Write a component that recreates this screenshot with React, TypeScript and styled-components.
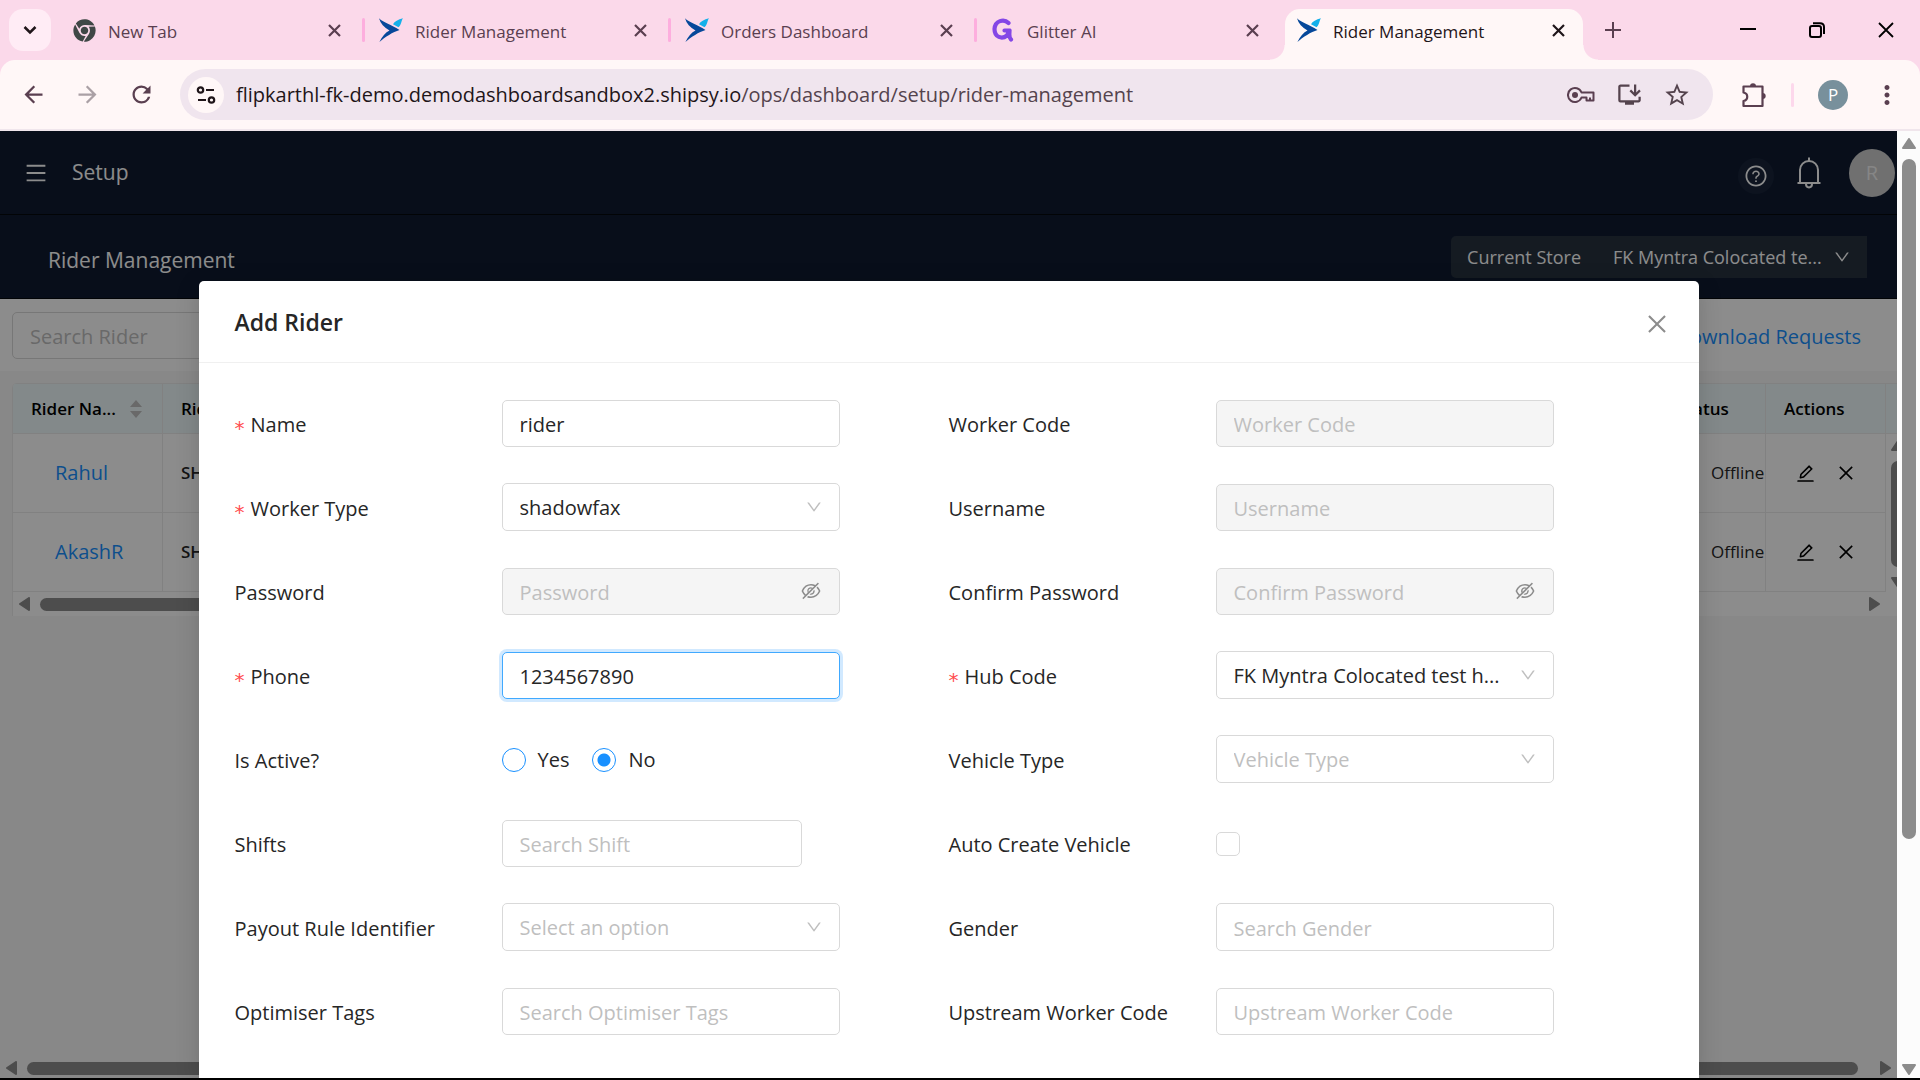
import React from "react";
import styled, { createGlobalStyle, css } from "styled-components";
import {
  AiOutlineClose,
  AiOutlineDown,
  AiOutlineEdit,
  AiOutlineEyeInvisible,
  AiOutlineMenu,
  AiOutlineQuestionCircle,
} from "react-icons/ai";
import {
  MdArrowBack,
  MdArrowForward,
  MdMoreVert,
  MdOutlineInstallDesktop,
  MdRefresh,
  MdStarOutline,
} from "react-icons/md";
import { FaChrome } from "react-icons/fa";

const GlobalStyle = createGlobalStyle`
  * { box-sizing: border-box; }
  body {
    margin: 0;
    font-family: "Open Sans", "Noto Sans", sans-serif;
    font-size: 20px;
    line-height: 32px;
    color: #262626;
    background: #000;
  }
  button, input, select { font: inherit; color: inherit; }
  h1, h2, p { margin: 0; font-weight: 400; }
`;

const BrowserWindow = styled.div`
  display: flex;
  flex-direction: column;
  height: 100vh;
  padding-bottom: 2px;
  overflow: hidden;
  background: #000;
`;

/* ---------- browser frame ---------- */

const TabStrip = styled.header`
  display: flex;
  flex: none;
  height: 60px;
  padding-left: 9px;
  background: #fbd9ea;
  color: #5a3f50;
`;

const PlainButton = styled.button<{ $w?: number; $h?: number }>`
  display: flex;
  flex: none;
  align-items: center;
  justify-content: center;
  width: ${(p) => p.$w ?? 42}px;
  height: ${(p) => p.$h ?? 42}px;
  padding: 0;
  border: 0;
  background: transparent;
`;

const TabSearch = styled(PlainButton)`
  margin: 9px 10px 0 0;
  border-radius: 14px;
  background: #ffecf5;
  color: #1f1519;
`;

const Tabs = styled.nav`
  display: flex;
  align-items: flex-end;
  gap: 8px;
  min-width: 0;
`;

const Tab = styled.div<{ $active?: boolean; $divider?: boolean }>`
  position: relative;
  display: flex;
  align-items: center;
  width: 298px;
  height: 51px;
  padding: 0 13px 9px 12px;
  gap: 12px;
  border-radius: 15px 15px 0 0;
  ${(p) =>
    p.$active &&
    css`
      background: #fff7f7;
      color: #1f1519;
      &::before,
      &::after {
        content: "";
        position: absolute;
        bottom: 0;
        width: 15px;
        height: 15px;
      }
      &::before {
        right: 100%;
        background: radial-gradient(circle at 0 0, transparent 14px, #fff7f7 15px);
      }
      &::after {
        left: 100%;
        background: radial-gradient(circle at 100% 0, transparent 14px, #fff7f7 15px);
      }
    `}
  ${(p) =>
    p.$divider &&
    css`
      &::after {
        content: "";
        position: absolute;
        left: calc(100% + 3px);
        top: 9px;
        width: 3px;
        height: 24px;
        border-radius: 2px;
        background: #fdaede;
      }
    `}
`;

const TabTitle = styled.span`
  flex: 1;
  padding-top: 4px;
  font-size: 17px;
  line-height: 24px;
  white-space: nowrap;
`;

const NewTab = styled(PlainButton)`
  margin: 9px 0 0 9px;
  color: #5a3f50;
`;

const WindowControls = styled.div`
  display: flex;
  margin-left: auto;
  color: #000;
`;

const ToolbarBack = styled.div`
  flex: none;
  background: #fbd9ea;
`;

const Toolbar = styled.div`
  display: flex;
  align-items: center;
  height: 71px;
  padding: 0 12px;
  border-radius: 15px 15px 0 0;
  border-bottom: 2px solid #f0e6ec;
  background: #fff7f7;
  color: #5a3f50;
`;

const NavButtons = styled.div`
  display: flex;
  gap: 12px;
  margin-right: 18px;
`;

const Omnibox = styled.div`
  display: flex;
  flex: 1;
  align-items: center;
  height: 51px;
  padding: 0 12px 0 8px;
  border-radius: 26px;
  background: #f0e5ee;
`;

const SiteInfo = styled(PlainButton)`
  margin-right: 12px;
  border-radius: 50%;
  background: #fff7f7;
  color: #1f1519;
`;

const Url = styled.p`
  flex: 1;
  color: #54434d;
  line-height: 28px;
  white-space: nowrap;
  b {
    font-weight: 400;
    color: #1f1519;
  }
`;

const ToolbarRight = styled.div`
  display: flex;
  align-items: center;
  margin-left: 20px;
`;

const ToolbarDivider = styled.span`
  width: 3px;
  height: 24px;
  margin: 0 18px 0 16px;
  border-radius: 2px;
  background: #fdd8ec;
`;

const ProfileButton = styled(PlainButton)`
  margin-right: 12px;
`;

const ProfileInitial = styled.span`
  display: flex;
  align-items: center;
  justify-content: center;
  width: 30px;
  height: 30px;
  border-radius: 50%;
  background: #78909c;
  color: #fff;
  font-size: 17px;
`;

/* ---------- scroll bars ---------- */

const BarBox = styled.div<{ $vertical?: boolean; $inset: string }>`
  display: flex;
  flex: none;
  flex-direction: ${(p) => (p.$vertical ? "column" : "row")};
  align-items: center;
  gap: 10px;
  padding: ${(p) => p.$inset};
  color: #8c8c8c;
  ${(p) => (p.$vertical ? "width: 23px;" : "height: 20px;")}
  svg { flex: none; }
`;

const BarTrack = styled.div<{ $vertical?: boolean; $size: string }>`
  flex: 1;
  ${(p) => (p.$vertical ? "width: 14px;" : "height: 13px;")}
  &::before {
    content: "";
    display: block;
    border-radius: 7px;
    background: currentColor;
    ${(p) =>
      p.$vertical
        ? css`width: 100%; height: ${p.$size};`
        : css`height: 100%; width: ${p.$size};`}
  }
`;

const arrows = {
  up: { w: 14, h: 11, d: "M7 1 L13 10 H1 Z" },
  down: { w: 14, h: 11, d: "M7 10 L13 1 H1 Z" },
  left: { w: 11, h: 14, d: "M1 7 L10 1 V13 Z" },
  right: { w: 11, h: 14, d: "M10 7 L1 1 V13 Z" },
};

const BarArrow = ({ to }: { to: keyof typeof arrows }) => {
  const a = arrows[to];
  return (
    <svg width={a.w} height={a.h} aria-hidden="true">
      <path d={a.d} fill="currentColor" stroke="currentColor" strokeWidth="2" strokeLinejoin="round" />
    </svg>
  );
};

const ScrollBar = ({ vertical, inset, size }: { vertical?: boolean; inset: string; size: string }) => (
  <BarBox $vertical={vertical} $inset={inset} aria-hidden="true">
    <BarArrow to={vertical ? "up" : "left"} />
    <BarTrack $vertical={vertical} $size={size} />
    <BarArrow to={vertical ? "down" : "right"} />
  </BarBox>
);

/* ---------- page ---------- */

const Viewport = styled.div`
  display: flex;
  flex: 1;
  min-height: 0;
  background: #fcfcfc;
`;

const Page = styled.main`
  position: relative;
  display: flex;
  flex: 1;
  flex-direction: column;
  min-width: 0;
  overflow: hidden;
  background: #f7f7f7;
`;

const TopBar = styled.div`
  display: flex;
  flex: none;
  align-items: center;
  height: 84px;
  padding: 0 2px 0 24px;
  border-bottom: 1px solid #05080c;
  background: #0f1b31;
  color: #fff;
`;

const TopTitle = styled.h1`
  flex: 1;
  margin-left: 12px;
  padding-bottom: 2px;
  font-size: 21px;
  line-height: 32px;
`;

const MenuButton = styled(PlainButton)`
  justify-content: flex-start;
`;

const HelpButton = styled(PlainButton)`
  margin: 6px 17px 0 0;
  border-radius: 50%;
  background: #18243a;
  color: #fff;
`;

const BellButton = styled(PlainButton)`
  margin-right: 22px;
  color: #fff;
`;

const UserBadge = styled.span`
  display: flex;
  align-items: center;
  justify-content: center;
  width: 46px;
  height: 48px;
  border-radius: 50%;
  background: #ccc;
  color: #f5f5f5;
`;

const SubBar = styled.div`
  display: flex;
  flex: none;
  align-items: center;
  justify-content: space-between;
  height: 84px;
  padding: 0 30px 0 48px;
  border-bottom: 1px solid #05080c;
  background: #0f1b31;
  color: #fff;
`;

const SubTitle = styled.h2`
  padding-top: 6px;
  font-size: 21px;
`;

const StorePicker = styled.label`
  display: flex;
  align-items: center;
  height: 42px;
  padding: 0 16px;
  gap: 32px;
  border-radius: 5px 0 0 5px;
  background: #27323f;
  font-size: 18px;
`;

const SelectWrap = styled.span<{ $w?: string }>`
  display: grid;
  align-items: center;
  width: ${(p) => p.$w ?? "100%"};
  > * { grid-area: 1 / 1; }
  > svg {
    justify-self: end;
    pointer-events: none;
  }
`;

const StoreSelect = styled.select`
  appearance: none;
  width: 100%;
  padding: 0;
  border: 0;
  background: transparent;
`;

const FilterBar = styled.div`
  display: flex;
  flex: none;
  align-items: center;
  justify-content: space-between;
  height: 72px;
  padding: 0 36px 0 12px;
  background: #fff;
`;

const link = css`
  color: #1890ff;
  text-decoration: none;
`;

const DownloadLink = styled.a`
  ${link}
  padding-top: 4px;
`;

const boxed = css<{ $focused?: boolean; $tall?: boolean }>`
  width: 100%;
  height: ${(p) => (p.$tall ? 48 : 47)}px;
  padding: 2px 17px 0;
  border: 1px solid #d9d9d9;
  border-radius: 5px;
  outline: 0;
  background: #fff;
  &::placeholder {
    color: #bfbfbf;
    opacity: 1;
  }
  &:disabled {
    background: #f5f5f5;
  }
  ${(p) =>
    p.$focused &&
    css`
      border-color: #40a9ff;
      box-shadow: 0 0 0 3px rgba(24, 144, 255, 0.2);
    `}
`;

const TextInput = styled.input`
  ${boxed}
`;

const FilterInput = styled(TextInput)`
  width: 300px;
`;

const TableArea = styled.div`
  flex: none;
  margin: 12px 0 0 12px;
  padding-bottom: 4px;
  border-left: 1px solid #ececec;
  border-radius: 5px 0 0;
  overflow: hidden;
  background: #fff;
`;

const TableRow = styled.div`
  display: flex;
`;

const RiderTable = styled.table`
  flex: 1;
  width: 100%;
  border-collapse: separate;
  border-spacing: 0;
  table-layout: fixed;
  th, td {
    padding: 0 0 0 18px;
    overflow: hidden;
    border-right: 1px solid #ececec;
    border-bottom: 1px solid #ececec;
    text-align: left;
    white-space: nowrap;
  }
  th {
    height: 51px;
    border-top: 1px solid #ececec;
    background: #eefafb;
    color: #000;
    font-size: 17px;
    font-weight: 600;
  }
  td {
    height: 79px;
    font-size: 17px;
  }
`;

const HeadCell = styled.span`
  display: flex;
  align-items: center;
  gap: 14px;
`;

const NameLink = styled.a`
  ${link}
  padding-left: 24px;
  font-size: 20px;
`;

const StrongText = styled.span`
  font-weight: 600;
`;

const StatusText = styled.span`
  padding-left: 34px;
  font-weight: 500;
  color: #262626;
`;

const Actions = styled.span`
  display: flex;
  gap: 17px;
  padding-left: 9px;
`;

const Gutter = styled.div`
  flex: none;
  width: 11px;
  overflow: hidden;
  > span {
    display: block;
    height: 51px;
    border-top: 1px solid #ececec;
    border-bottom: 1px solid #ececec;
    background: #eefafb;
  }
  > div { height: 158px; }
`;

const Spacer = styled.div`
  flex: 1;
`;

/* ---------- dialog ---------- */

const Mask = styled.div`
  position: absolute;
  inset: 0;
  display: flex;
  justify-content: center;
  padding-top: 150px;
  background: rgba(0, 0, 0, 0.45);
`;

const Dialog = styled.section`
  width: 1500px;
  max-width: calc(100% - 48px);
  border-radius: 5px 5px 0 0;
  background: #fff;
  box-shadow: 0 5px 24px rgba(0, 0, 0, 0.16);
`;

const DialogHead = styled.div`
  display: flex;
  align-items: center;
  justify-content: space-between;
  height: 82px;
  padding: 0 21px 0 36px;
  border-bottom: 1px solid #f0f0f0;
  h2 {
    padding-top: 1px;
    font-size: 23px;
    font-weight: 600;
  }
  button {
    padding-top: 4px;
    color: #8c8c8c;
  }
`;

const FormGrid = styled.form`
  display: grid;
  grid-template-columns: 1fr 1fr;
  row-gap: 36px;
  padding: 36px;
`;

const Row = styled.div`
  display: grid;
  grid-template-columns: 267fr 338fr 109fr;
  align-items: center;
  height: 48px;
`;

const RowLabel = styled.label<{ $required?: boolean }>`
  padding-top: 4px;
  ${(p) =>
    p.$required &&
    css`
      &::before {
        content: "*";
        margin-right: 6px;
        color: #ff4d4f;
        font-family: "DejaVu Sans", sans-serif;
        line-height: 20px;
        vertical-align: -3px;
      }
    `}
`;

const Control = styled.div<{ $short?: boolean }>`
  display: flex;
  align-items: center;
  width: ${(p) => (p.$short ? "89%" : "100%")};
`;

const SelectBox = styled.select<{ $empty?: boolean }>`
  ${boxed}
  appearance: none;
  color: ${(p) => (p.$empty ? "#bfbfbf" : "#262626")};
  & + svg {
    margin-right: 17px;
    color: #bfbfbf;
  }
`;

const PasswordWrap = styled(SelectWrap)`
  > svg {
    margin-right: 18px;
    color: #8c8c8c;
  }
`;

const Choice = styled.label`
  display: flex;
  align-items: center;
  gap: 12px;
  margin-right: 23px;
  padding-top: 2px;
`;

const Radio = styled.input`
  appearance: none;
  width: 24px;
  height: 24px;
  margin: 0;
  border: 1px solid #1890ff;
  border-radius: 50%;
  &:checked {
    background: radial-gradient(circle, #1890ff 6px, #fff 7px);
  }
`;

const Checkbox = styled.input`
  appearance: none;
  width: 24px;
  height: 24px;
  margin: 2px 0 0;
  border: 1px solid #d9d9d9;
  border-radius: 5px;
`;

/* ---------- drawings ---------- */

const ShipsyMark = () => (
  <svg width="24" height="24" viewBox="0 0 24 24" aria-hidden="true">
    <path d="M0 0.3 C5 5 12 6.5 20.5 12 C14 14 6 19 0.4 24 C3 18.500 6.500 14.500 10.500 12.500 C5 9.500 1.500 5.500 0 0.300Z" fill="#06489a" />
    <path d="M24 0.300 C19 1.500 15.500 3.500 14 6.200 L19.500 9.200 C22.500 7 22 3 24 0.300Z" fill="#14b0ea" />
  </svg>
);

const GlitterMark = () => (
  <svg width="24" height="24" viewBox="0 0 24 24" fill="none" stroke="#8447e6" strokeLinecap="round" strokeLinejoin="round" aria-hidden="true">
    <path d="M17.500 5 C13 0.500 4 2.500 3.500 11 C3.500 19.500 11 21.500 16 17.500 L18.500 12.500 H13.500 M18.500 12.500 C18.500 17 17.500 19 20 21.500" strokeWidth="4.200" />
  </svg>
);

const TabClose = () => (
  <svg width="13" height="13" viewBox="0 0 13 13" stroke="currentColor" strokeWidth="2.200" aria-hidden="true">
    <path d="M1 1 L12 12 M12 1 L1 12" />
  </svg>
);

const SiteControls = () => (
  <svg width="20" height="20" viewBox="0 0 20 20" fill="none" stroke="currentColor" strokeWidth="2.200" aria-hidden="true">
    <circle cx="4.500" cy="5" r="2.700" />
    <path d="M10 5 H18 M2 15 H10" />
    <circle cx="15.500" cy="15" r="2.700" />
  </svg>
);

const KeyMark = () => (
  <svg width="28" height="20" viewBox="0 0 28 20" fill="none" stroke="currentColor" strokeWidth="2" strokeLinejoin="round" aria-hidden="true">
    <path d="M14.500 7.500 A7 7 0 1 0 14.500 12.500 H19.500 V15.500 H26.500 V7.500 Z M23 15.500 V12.500" />
    <circle cx="8" cy="10" r="3" fill="currentColor" stroke="none" />
  </svg>
);

const PuzzleMark = () => (
  <svg width="26" height="26" viewBox="0 0 26 26" fill="none" stroke="currentColor" strokeWidth="2.200" strokeLinejoin="round" aria-hidden="true">
    <path d="M2.500 4.500 H21.500 V24 H2.500 V19 C7.500 18 7.500 11.500 2.500 10.500 Z" />
    <path d="M9 4.500 A3 3.200 0 0 1 15 4.500 Z M21.500 11 A3.200 3 0 0 1 21.500 17 Z" fill="currentColor" stroke="none" />
  </svg>
);

const Bell = () => (
  <svg width="24" height="32" viewBox="0 0 24 32" fill="none" stroke="currentColor" strokeWidth="2" aria-hidden="true">
    <path d="M3 26 V13 C3 8 7 4 12 4 C17 4 21 8 21 13 V26 M0.500 26 H23.500 M12 4 V0.500" />
    <path d="M9 27 C9 31.500 15 31.500 15 27" />
  </svg>
);

const SortMark = () => (
  <svg width="12" height="18" viewBox="0 0 12 18" fill="#bfbfbf" aria-hidden="true">
    <path d="M6 0 L12 7 H0 Z M6 18 L12 11 H0 Z" />
  </svg>
);

/* ---------- parts ---------- */

type FieldProps = {
  id: string;
  label: string;
  required?: boolean;
  short?: boolean;
  children: React.ReactNode;
};

const Field = ({ id, label, required, short, children }: FieldProps) => (
  <Row>
    <RowLabel htmlFor={id} $required={required}>{label}</RowLabel>
    <Control $short={short}>{children}</Control>
  </Row>
);

const Dropdown = ({ id, value, empty }: { id: string; value: string; empty?: boolean }) => (
  <SelectWrap>
    <SelectBox id={id} $empty={empty} $tall>
      <option>{value}</option>
    </SelectBox>
    <AiOutlineDown size={18} />
  </SelectWrap>
);

const PasswordInput = ({ id, placeholder }: { id: string; placeholder: string }) => (
  <PasswordWrap>
    <TextInput id={id} type="password" placeholder={placeholder} disabled />
    <AiOutlineEyeInvisible size={22} />
  </PasswordWrap>
);

const tabs = [
  { title: "New Tab", icon: <FaChrome size={23} color="#3f4746" />, divider: true },
  { title: "Rider Management", icon: <ShipsyMark />, divider: true },
  { title: "Orders Dashboard", icon: <ShipsyMark />, divider: true },
  { title: "Glitter AI", icon: <GlitterMark /> },
  { title: "Rider Management", icon: <ShipsyMark />, active: true },
];

const riders = ["Rahul", "AkashR"];

export default function App() {
  return (
    <BrowserWindow>
      <GlobalStyle />
      <TabStrip>
        <TabSearch aria-label="Search tabs">
          <svg width="14" height="10" fill="none" stroke="currentColor" strokeWidth="2.500">
            <path d="M1.500 2 L7 7.500 L12.500 2" />
          </svg>
        </TabSearch>
        <Tabs>
          {tabs.map((t, i) => (
            <Tab key={i} $active={t.active} $divider={t.divider}>
              {t.icon}
              <TabTitle>{t.title}</TabTitle>
              <PlainButton $w={24} $h={24} aria-label="Close tab"><TabClose /></PlainButton>
            </Tab>
          ))}
        </Tabs>
        <NewTab aria-label="New tab">
          <svg width="16" height="16" stroke="currentColor" strokeWidth="2"><path d="M8 0 V16 M0 8 H16" /></svg>
        </NewTab>
        <WindowControls>
          <PlainButton $w={69} $h={60} aria-label="Minimize">
            <svg width="16" height="16" stroke="#000" strokeWidth="2"><path d="M0 7 H16" /></svg>
          </PlainButton>
          <PlainButton $w={69} $h={60} aria-label="Restore">
            <svg width="16" height="16" fill="none" stroke="#000" strokeWidth="2">
              <rect x="1" y="4" width="11" height="11" rx="2" />
              <path d="M4 1.200 H11 Q15 1.200 15 5 V12" />
            </svg>
          </PlainButton>
          <PlainButton $w={69} $h={60} aria-label="Close">
            <svg width="16" height="16" stroke="#000" strokeWidth="1.800"><path d="M1 1 L15 15 M15 1 L1 15" /></svg>
          </PlainButton>
        </WindowControls>
      </TabStrip>
      <ToolbarBack>
        <Toolbar>
          <NavButtons>
            <PlainButton aria-label="Back"><MdArrowBack size={27} color="#5a3f50" /></PlainButton>
            <PlainButton aria-label="Forward"><MdArrowForward size={27} color="#aaa0a5" /></PlainButton>
            <PlainButton aria-label="Reload"><MdRefresh size={27} color="#5a3f50" /></PlainButton>
          </NavButtons>
          <Omnibox>
            <SiteInfo $w={36} $h={36} aria-label="Site information"><SiteControls /></SiteInfo>
            <Url><b>flipkarthl-fk-demo.demodashboardsandbox2.shipsy.io</b>/ops/dashboard/setup/rider-management</Url>
            <PlainButton $w={48} aria-label="Passwords"><KeyMark /></PlainButton>
            <PlainButton $w={48} aria-label="Install"><MdOutlineInstallDesktop size={27} color="#54434d" /></PlainButton>
            <PlainButton $w={48} aria-label="Bookmark"><MdStarOutline size={28} color="#54434d" /></PlainButton>
          </Omnibox>
          <ToolbarRight>
            <PlainButton aria-label="Extensions"><PuzzleMark /></PlainButton>
            <ToolbarDivider />
            <ProfileButton aria-label="Profile"><ProfileInitial>P</ProfileInitial></ProfileButton>
            <PlainButton aria-label="Menu"><MdMoreVert size={30} color="#5a3f50" /></PlainButton>
          </ToolbarRight>
        </Toolbar>
      </ToolbarBack>

      <Viewport>
        <Page>
          <TopBar>
            <MenuButton $w={36} aria-label="Open menu"><AiOutlineMenu size={24} color="#fff" /></MenuButton>
            <TopTitle>Setup</TopTitle>
            <HelpButton $w={36} $h={36} aria-label="Help"><AiOutlineQuestionCircle size={24} /></HelpButton>
            <BellButton $w={36} aria-label="Notifications"><Bell /></BellButton>
            <UserBadge>R</UserBadge>
          </TopBar>
          <SubBar>
            <SubTitle>Rider Management</SubTitle>
            <StorePicker>
              Current Store
              <SelectWrap $w="238px">
                <StoreSelect>
                  <option>FK Myntra Colocated te...</option>
                </StoreSelect>
                <AiOutlineDown size={18} />
              </SelectWrap>
            </StorePicker>
          </SubBar>
          <FilterBar>
            <FilterInput placeholder="Search Rider" aria-label="Search Rider" />
            <DownloadLink href="#">Download Requests</DownloadLink>
          </FilterBar>
          <TableArea>
            <TableRow>
              <RiderTable>
                <colgroup>
                  <col style={{ width: 150 }} />
                  <col />
                  <col style={{ width: 107 }} />
                  <col style={{ width: 120 }} />
                </colgroup>
                <thead>
                  <tr>
                    <th><HeadCell>Rider Na...<SortMark /></HeadCell></th>
                    <th>Rider ID</th>
                    <th>Status</th>
                    <th>Actions</th>
                  </tr>
                </thead>
                <tbody>
                  {riders.map((name) => (
                    <tr key={name}>
                      <td><NameLink href="#">{name}</NameLink></td>
                      <td><StrongText>SHFX</StrongText></td>
                      <td><StatusText>Offline</StatusText></td>
                      <td>
                        <Actions>
                          <PlainButton $w={24} $h={24} aria-label="Edit"><AiOutlineEdit size={21} color="#000" /></PlainButton>
                          <PlainButton $w={24} $h={24} aria-label="Remove"><AiOutlineClose size={20} color="#000" /></PlainButton>
                        </Actions>
                      </td>
                    </tr>
                  ))}
                </tbody>
              </RiderTable>
              <Gutter>
                <span />
                <ScrollBar vertical inset="6px 0 4px" size="100%" />
              </Gutter>
            </TableRow>
            <ScrollBar inset="4px 17px 0 6px" size="60%" />
          </TableArea>
          <Spacer />
          <ScrollBar inset="0 6px" size="calc(100% - 12px)" />

          <Mask>
            <Dialog role="dialog" aria-labelledby="dialog-title">
              <DialogHead>
                <h2 id="dialog-title">Add Rider</h2>
                <PlainButton aria-label="Close dialog"><AiOutlineClose size={26} /></PlainButton>
              </DialogHead>
              <FormGrid>
                <Field id="name" label="Name" required><TextInput id="name" defaultValue="rider" /></Field>
                <Field id="code" label="Worker Code"><TextInput id="code" placeholder="Worker Code" disabled /></Field>
                <Field id="type" label="Worker Type" required><Dropdown id="type" value="shadowfax" /></Field>
                <Field id="user" label="Username"><TextInput id="user" placeholder="Username" disabled /></Field>
                <Field id="pass" label="Password"><PasswordInput id="pass" placeholder="Password" /></Field>
                <Field id="confirm" label="Confirm Password"><PasswordInput id="confirm" placeholder="Confirm Password" /></Field>
                <Field id="phone" label="Phone" required><TextInput id="phone" defaultValue="1234567890" $focused /></Field>
                <Field id="hub" label="Hub Code" required><Dropdown id="hub" value="FK Myntra Colocated test h..." /></Field>
                <Field id="active" label="Is Active?">
                  <Choice><Radio id="active" type="radio" name="active" />Yes</Choice>
                  <Choice><Radio type="radio" name="active" defaultChecked />No</Choice>
                </Field>
                <Field id="vehicle" label="Vehicle Type"><Dropdown id="vehicle" value="Vehicle Type" empty /></Field>
                <Field id="shifts" label="Shifts" short><TextInput id="shifts" placeholder="Search Shift" /></Field>
                <Field id="auto" label="Auto Create Vehicle"><Checkbox id="auto" type="checkbox" /></Field>
                <Field id="payout" label="Payout Rule Identifier"><Dropdown id="payout" value="Select an option" empty /></Field>
                <Field id="gender" label="Gender"><TextInput id="gender" placeholder="Search Gender" $tall /></Field>
                <Field id="tags" label="Optimiser Tags"><TextInput id="tags" placeholder="Search Optimiser Tags" /></Field>
                <Field id="upstream" label="Upstream Worker Code"><TextInput id="upstream" placeholder="Upstream Worker Code" /></Field>
              </FormGrid>
            </Dialog>
          </Mask>
        </Page>
        <ScrollBar vertical inset="7px 0 3px" size="76%" />
      </Viewport>
    </BrowserWindow>
  );
}
